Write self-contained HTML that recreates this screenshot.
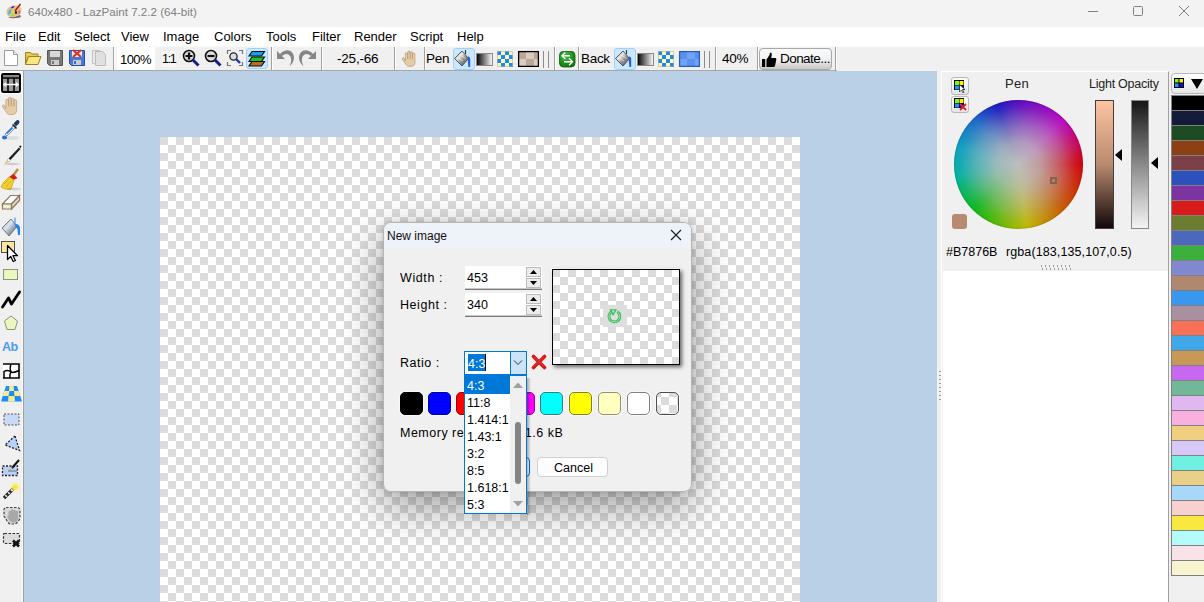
<!DOCTYPE html>
<html><head><meta charset="utf-8">
<style>
*{box-sizing:border-box;margin:0;padding:0}
html,body{width:1204px;height:602px;overflow:hidden;background:#f0f0f0;font-family:"Liberation Sans",sans-serif;font-size:12px;color:#000}
.a{position:absolute}
.t{position:absolute;white-space:nowrap;line-height:1}
#title{left:0;top:0;width:1204px;height:27px;background:#f3f3f3}
#menu{left:0;top:27px;width:1204px;height:19px;background:#fff}
#tb{left:0;top:46px;width:1204px;height:25px;background:#f0f0f0;border-bottom:1px solid #f4f2f0}
#left{left:0;top:71px;width:24px;height:531px;background:#f0f0f0;border-right:1px solid #a0a0a0}
#canvas{left:24px;top:71px;width:913px;height:531px;background:#bad0e6;overflow:hidden}
#img{left:136px;top:66px;width:640px;height:480px;

 background:conic-gradient(#fff 25%,#dcdcdc 0 50%,#fff 0 75%,#dcdcdc 0) 0 0/16px 16px}

.chk{background:conic-gradient(#fff 25%,#dcdcdc 0 50%,#fff 0 75%,#dcdcdc 0) 0 0/16px 16px}
#panel{left:941px;top:71px;width:228px;height:531px;background:#f0f0f0;border-left:1px solid #fff;border-top:1px solid #fff;border-right:1px solid #a0a0a0}
#pal{left:1169px;top:71px;width:35px;height:531px;background:#f0f0f0}
.sep{position:absolute;top:47px;width:2px;height:23px;border-left:1px solid #a0a0a0;border-right:1px solid #fff}
.menu{font-size:13px}
.sp{width:15px;height:10px;margin-left:-1px;background:#ececec;border:1px solid #bcbcbc;display:flex;align-items:center;justify-content:center}
.sp svg{display:block}
.cb{position:absolute;top:392px;width:23px;height:23px;border:1px solid;border-radius:5px;box-shadow:0 0 0 1px rgba(255,255,255,.6)}
.dd{left:467px;font-size:12.5px}
</style></head><body>
<div id="title" class="a">
 <svg class="a" style="left:5px;top:2px" width="18" height="18" viewBox="0 0 18 18"><path d="M3 15.5c3 1 9 1 13-.5l-1-2z" fill="#444" opacity=".8"/><path d="M1.5 10c0-4 4-6.5 8-6.5 4 0 7 2 7 4.5 0 3-2 6-6.5 7-5 1-8.5-1-8.5-5z" fill="#e0c090"/><path d="M3 12c0-2 1-4 2.5-5 1 0 1 2 0 4-.8 1.5-2 2-2.5 1z" fill="#40b8f0"/><path d="M6 5.5c1-1 3-1.5 3.5-1-.2.8-2 2-3 2z" fill="#2020e0"/><path d="M7 8c1-1 2.5-1 3 .5-.5 1-2 1.5-3 .5z" fill="#f8d820"/><path d="M5 13.5c1-1.5 3-2 4.5-1.5.5.8 0 1.8-1 2-1.2.3-2.5 0-3.5-.5z" fill="#a8e030"/><ellipse cx="11" cy="10.5" rx="1" ry="1.5" fill="#201010"/><path d="M13.5 9c.5-.8 1.5-.5 1.5.5l-.5 2.5c-.5.3-1 0-1-.5z" fill="#e04080"/><path d="M10 9l5.5-7" stroke="#b02010" stroke-width="1.6"/></svg>
<svg class="a" style="left:1088px;top:11px" width="10" height="1"><rect width="10" height="1" fill="#808080"/></svg>
<svg class="a" style="left:1133px;top:6px" width="10" height="10" viewBox="0 0 10 10"><rect x=".5" y=".5" width="9" height="9" rx="1" fill="none" stroke="#808080"/></svg>
<svg class="a" style="left:1179px;top:6px" width="10" height="10" viewBox="0 0 10 10"><path d="M0 0l10 10M10 0L0 10" stroke="#808080" stroke-width="1"/></svg>
<div class="t" style="left:28px;top:6px;font-size:11.6px;color:#808080">640x480 - LazPaint 7.2.2 (64-bit)</div>
</div>
<div id="menu" class="a">
 <div class="t menu" style="left:5px;top:3px">File</div>
 <div class="t menu" style="left:38px;top:3px">Edit</div>
 <div class="t menu" style="left:74px;top:3px">Select</div>
 <div class="t menu" style="left:121px;top:3px">View</div>
 <div class="t menu" style="left:163px;top:3px">Image</div>
 <div class="t menu" style="left:214px;top:3px">Colors</div>
 <div class="t menu" style="left:266px;top:3px">Tools</div>
 <div class="t menu" style="left:312px;top:3px">Filter</div>
 <div class="t menu" style="left:354px;top:3px">Render</div>
 <div class="t menu" style="left:410px;top:3px">Script</div>
 <div class="t menu" style="left:457px;top:3px">Help</div>
</div>
<div id="tb" class="a"></div>
<div class="a" style="left:0;top:46px;width:1204px;height:1px;background:#fafafa"></div>
<div class="a" style="left:0;top:70px;width:837px;height:1px;background:#a8a8a8"></div>
<!-- separators -->
<div class="sep" style="left:113px"></div>
<div class="sep" style="left:271px"></div>
<div class="sep" style="left:321px"></div>
<div class="sep" style="left:394px"></div>
<div class="sep" style="left:424px"></div>
<div class="sep" style="left:554px"></div>
<div class="sep" style="left:578px"></div>
<div class="sep" style="left:715px"></div>
<div class="sep" style="left:757px"></div>
<div class="sep" style="left:835px"></div>
<!-- new -->
<svg class="a" style="left:3px;top:49px" width="16" height="18" viewBox="0 0 16 18"><path d="M1.5 1.5h9l4 4v11h-13z" fill="#fff" stroke="#9a9a9a"/><path d="M10.5 1.5v4h4" fill="#eee" stroke="#9a9a9a"/></svg>
<!-- open -->
<svg class="a" style="left:24px;top:50px" width="18" height="16" viewBox="0 0 18 16"><path d="M1.5 2.5h5l1.5 1.5h6v3h-10l-2.5 7z" fill="#e8c94a" stroke="#a08020"/><path d="M1.5 14.5l3-8h12.5l-3 8z" fill="#f8e680" stroke="#a08020"/></svg>
<!-- save -->
<svg class="a" style="left:46px;top:49px" width="18" height="18" viewBox="0 0 18 18"><path d="M1.5 1.5h15v15h-13l-2-2z" fill="#777" stroke="#555"/><rect x="4" y="2" width="10" height="6" fill="#d8d8d8"/><rect x="5" y="11" width="8" height="5" fill="#ccc"/><rect x="6" y="12" width="2" height="3" fill="#777"/></svg>
<!-- save close -->
<svg class="a" style="left:68px;top:49px" width="18" height="18" viewBox="0 0 18 18"><path d="M1.5 1.5h15v15h-13l-2-2z" fill="#4a78d8" stroke="#2050b0"/><rect x="4" y="2" width="10" height="6" fill="#e0e8f8"/><rect x="5" y="11" width="8" height="5" fill="#ccc"/><rect x="6" y="12" width="2" height="3" fill="#3070e0"/><path d="M5 1l8 7M13 1l-8 7" stroke="#e03010" stroke-width="2.2"/></svg>
<!-- copy -->
<svg class="a" style="left:91px;top:49px" width="17" height="18" viewBox="0 0 17 18"><path d="M1.5 1.5h7l3 3v10h-10z" fill="#e8e8e8" stroke="#c4c4c4"/><path d="M4.5 2.5h7l3 3v11h-10z" fill="#e0e0e0" stroke="#bdbdbd"/></svg>
<!-- 100% -->
<div class="a" style="left:115px;top:47px;width:40px;height:23px;background:#fff;border-left:2px solid #f4f4f4"></div>
<div class="t" style="left:120px;top:53px;font-size:13px;letter-spacing:-.6px">100%</div>
<div class="a" style="left:162px;top:51px;width:14px;height:16px;background:#f6f6f6"></div>
<div class="t" style="left:162px;top:53px;font-size:12.5px;letter-spacing:-1.3px">1:1</div>
<!-- zoom in -->
<svg class="a" style="left:182px;top:49px" width="18" height="18" viewBox="0 0 18 18"><circle cx="7" cy="7" r="5.5" fill="#ddd" stroke="#111" stroke-width="1.6"/><path d="M10.5 10.5l6 6" stroke="#1a1a90" stroke-width="3"/><path d="M7 3.5v7M3.5 7h7" stroke="#111" stroke-width="2.2"/></svg>
<!-- zoom out -->
<svg class="a" style="left:204px;top:49px" width="18" height="18" viewBox="0 0 18 18"><circle cx="7" cy="7" r="5.5" fill="#ddd" stroke="#111" stroke-width="1.6"/><path d="M10.5 10.5l6 6" stroke="#1a1a90" stroke-width="3"/><path d="M3.5 7h7" stroke="#111" stroke-width="2.2"/></svg>
<!-- zoom fit -->
<svg class="a" style="left:226px;top:49px" width="18" height="18" viewBox="0 0 18 18"><path d="M1.5 5V1.5H5M13 1.5h3.5V5M16.5 13v3.5H13M5 16.5H1.5V13" fill="none" stroke="#777" stroke-width="1.2"/><circle cx="7.5" cy="7.5" r="3.6" fill="#ddd" stroke="#222" stroke-width="1.3"/><path d="M10 10l4 4" stroke="#2a2ab0" stroke-width="2.4"/></svg>
<!-- layers -->
<div class="a" style="left:246px;top:48px;width:22px;height:21px;background:#cce8ff;border:1px solid #99d1ff;border-radius:3px"></div>
<svg class="a" style="left:248px;top:50px" width="18" height="17" viewBox="0 0 18 17"><path d="M4 11.5h12.5l-3 4.5h-12.5z" fill="#b86a30" stroke="#111" stroke-width="1.2"/><path d="M4 7h12.5l-3 4.5h-12.5z" fill="#20c020" stroke="#111" stroke-width="1.2"/><path d="M4 1.5h12.5l-3 4.5h-12.5z" fill="#18a0f0" stroke="#111" stroke-width="1.2"/></svg>
<!-- undo/redo -->
<svg class="a" style="left:276px;top:49px" width="19" height="19" viewBox="0 0 19 19"><path d="M1 2V10H9z" fill="#858585"/><path d="M3.5 5.5C6 2.5 9 1.3 11.5 1.3 15 1.3 18 4.5 18 9c0 3-2 6-4.5 8.5C15 14 15.5 11.5 15 9.5 14.5 6.5 12.5 5 10.5 5 9 5 7.5 5.7 6.2 7z" fill="#858585"/></svg>
<svg class="a" style="left:298px;top:49px" width="19" height="19" viewBox="0 0 19 19"><g transform="translate(19 0) scale(-1 1)"><path d="M1 2V10H9z" fill="#858585"/><path d="M3.5 5.5C6 2.5 9 1.3 11.5 1.3 15 1.3 18 4.5 18 9c0 3-2 6-4.5 8.5C15 14 15.5 11.5 15 9.5 14.5 6.5 12.5 5 10.5 5 9 5 7.5 5.7 6.2 7z" fill="#858585"/></g></svg>
<div class="t" style="left:337px;top:52px;font-size:13.5px;letter-spacing:-.2px">-25,-66</div>
<!-- hand -->
<svg class="a" style="left:401px;top:50px" width="16" height="17" viewBox="0 0 16 17"><path d="M4.3 11V4a1.2 1.2 0 0 1 2.4 0V2.3a1.2 1.2 0 0 1 2.4 0V3a1.2 1.2 0 0 1 2.4 0v1.3a1.2 1.2 0 0 1 2.4 0v8c0 2-1 4-3.5 4H7.5c-1.5 0-2.5-1.5-3-2.5L1.5 9.5a1 1 0 0 1 1.6-1.3z" fill="#e4cca8" stroke="#b89870" stroke-width=".7"/><path d="M6.7 3.5v5.5M9.1 3v6M11.5 4v5" stroke="#b09070" stroke-width=".8"/></svg>
<div class="t" style="left:426px;top:52px;font-size:13.5px;letter-spacing:-.3px">Pen</div>
<!-- bucket1 -->
<div class="a" style="left:453px;top:48px;width:22px;height:22px;background:#cce8ff;border:1px solid #99d1ff;border-radius:3px"></div>
<svg class="a" style="left:453px;top:48px" width="20" height="20" viewBox="0 0 20 20"><defs><linearGradient id="bk" x1="0" y1="0" x2="1" y2="1"><stop offset="0" stop-color="#606060"/><stop offset=".35" stop-color="#e8e8e8"/><stop offset=".6" stop-color="#909090"/><stop offset="1" stop-color="#505050"/></linearGradient></defs><path d="M1.5 10.5L9 3l6.5 7.5L9 18z" fill="url(#bk)" stroke="#3a3a3a" stroke-width=".8"/><path d="M4 9l6 4M6.5 6.5l6 4" stroke="#fff" stroke-width="1" opacity=".5"/><path d="M12.5 2v4" stroke="#404040" stroke-width="1.2"/><path d="M15 8.5c1.5 0 2.2 1 2.2 2.5v8h-1.8l-.6-7z" fill="#1e60e0"/></svg>
<!-- gradient1 -->
<svg class="a" style="left:476px;top:53px" width="17" height="13" viewBox="0 0 17 13"><defs><linearGradient id="g1"><stop offset="0" stop-color="#000"/><stop offset="1" stop-color="#fff"/></linearGradient></defs><rect x=".5" y=".5" width="16" height="12" fill="url(#g1)" stroke="#888"/></svg>
<!-- checker1 -->
<svg class="a" style="left:497px;top:51px" width="16" height="16" viewBox="0 0 16 16"><rect width="16" height="16" fill="#fff8b0"/><g fill="#1e88f0"><rect x="0" y="0" width="4" height="4"/><rect x="8" y="0" width="4" height="4"/><rect x="4" y="4" width="4" height="4"/><rect x="12" y="4" width="4" height="4"/><rect x="0" y="8" width="4" height="4"/><rect x="8" y="8" width="4" height="4"/><rect x="4" y="12" width="4" height="4"/><rect x="12" y="12" width="4" height="4"/></g><rect x=".5" y=".5" width="15" height="15" fill="none" stroke="#b8b890" stroke-width=".6"/></svg>
<!-- texture1 -->
<svg class="a" style="left:517px;top:50px" width="23" height="18" viewBox="0 0 23 18"><rect x=".5" y=".5" width="22" height="17" fill="#fff"/><rect x="1" y="1" width="21" height="16" fill="#dccbc0"/><rect x="2" y="2" width="7" height="7" fill="#bca898"/><rect x="17" y="2" width="5" height="7" fill="#bca898"/><rect x="9" y="9" width="8" height="7" fill="#bca898"/><rect x="1.6" y="1.6" width="19.8" height="14.8" fill="none" stroke="#000" stroke-width="1.3"/></svg>
<div class="a" style="left:543px;top:51px;width:1px;height:17px;background:#8c8c8c"></div>
<div class="a" style="left:548px;top:51px;width:1px;height:17px;background:#8c8c8c"></div>
<!-- swap -->
<svg class="a" style="left:559px;top:51px" width="17" height="17" viewBox="0 0 17 17"><defs><radialGradient id="gs" cx=".4" cy=".3" r=".8"><stop offset="0" stop-color="#40c040"/><stop offset="1" stop-color="#087008"/></radialGradient></defs><rect x=".5" y=".3" width="15.5" height="15.7" rx="4" fill="url(#gs)" stroke="#0a600a" stroke-width=".8"/><path d="M11 4.8H3M6.3 1.5L3 4.8l3.3 3.3M5 10.8h8.5M10 7.3l3.5 3.5L10 14.3" fill="none" stroke="#fff" stroke-width="1.4"/></svg>
<div class="t" style="left:581px;top:52px;font-size:13.5px;letter-spacing:-.3px">Back</div>
<!-- bucket2 -->
<div class="a" style="left:614px;top:48px;width:22px;height:22px;background:#cce8ff;border:1px solid #99d1ff;border-radius:3px"></div>
<svg class="a" style="left:614px;top:48px" width="20" height="20" viewBox="0 0 20 20"><defs><linearGradient id="bk2" x1="0" y1="0" x2="1" y2="1"><stop offset="0" stop-color="#606060"/><stop offset=".35" stop-color="#e8e8e8"/><stop offset=".6" stop-color="#909090"/><stop offset="1" stop-color="#505050"/></linearGradient></defs><path d="M1.5 10.5L9 3l6.5 7.5L9 18z" fill="url(#bk2)" stroke="#3a3a3a" stroke-width=".8"/><path d="M4 9l6 4M6.5 6.5l6 4" stroke="#fff" stroke-width="1" opacity=".5"/><path d="M12.5 2v4" stroke="#404040" stroke-width="1.2"/><path d="M15 8.5c1.5 0 2.2 1 2.2 2.5v8h-1.8l-.6-7z" fill="#1e60e0"/></svg>
<svg class="a" style="left:637px;top:53px" width="17" height="13" viewBox="0 0 17 13"><rect x=".5" y=".5" width="16" height="12" fill="url(#g1)" stroke="#888"/></svg>
<svg class="a" style="left:658px;top:51px" width="16" height="16" viewBox="0 0 16 16"><rect width="16" height="16" fill="#fff8b0"/><g fill="#1e88f0"><rect x="0" y="0" width="4" height="4"/><rect x="8" y="0" width="4" height="4"/><rect x="4" y="4" width="4" height="4"/><rect x="12" y="4" width="4" height="4"/><rect x="0" y="8" width="4" height="4"/><rect x="8" y="8" width="4" height="4"/><rect x="4" y="12" width="4" height="4"/><rect x="12" y="12" width="4" height="4"/></g><rect x=".5" y=".5" width="15" height="15" fill="none" stroke="#b8b890" stroke-width=".6"/></svg>
<svg class="a" style="left:678px;top:50px" width="23" height="18" viewBox="0 0 23 18"><rect x=".5" y=".5" width="22" height="17" fill="#fcfaf4"/><rect x="1" y="1" width="21" height="16" fill="#70a4fc"/><rect x="2" y="2" width="7" height="7" fill="#5890ec"/><rect x="17" y="2" width="5" height="7" fill="#5890ec"/><rect x="9" y="9" width="8" height="7" fill="#5890ec"/><rect x="1.6" y="1.6" width="19.8" height="14.8" fill="none" stroke="#2a5cb8" stroke-width="1.3"/></svg>
<div class="a" style="left:704px;top:51px;width:1px;height:17px;background:#8c8c8c"></div>
<div class="a" style="left:709px;top:51px;width:1px;height:17px;background:#8c8c8c"></div>
<div class="t" style="left:722px;top:52px;font-size:13.5px;letter-spacing:-.3px">40%</div>
<!-- donate -->
<div class="a" style="left:759px;top:48px;width:73px;height:22px;border:1px solid #a8a8a8;border-radius:4px;background:linear-gradient(#fafafa,#f2f2f2 50%,#c8c8c8)"></div>
<svg class="a" style="left:761px;top:52px" width="16" height="16" viewBox="0 0 16 16"><rect x="1" y="7" width="3.2" height="8" fill="#000"/><path d="M5.5 7.5l3-4.5 .5-2.5c1.2 0 2 .8 1.8 2.5l-.6 3h4c.8 0 1.3.6 1.1 1.4l-1.2 6.2c-.2.8-.8 1.4-1.6 1.4h-7z" fill="#000"/></svg>
<div class="t" style="left:780px;top:52px;font-size:13.5px;letter-spacing:-.55px">Donate...</div>

<div id="left" class="a"></div>
<div class="a" style="left:22px;top:71px;width:1px;height:531px;background:#fbfbfb"></div>
<div class="a" style="left:0;top:71px;width:22px;height:23px;background:#fff"></div>
<!-- tool 1 selected -->
<svg class="a" style="left:1px;top:73px" width="20" height="20" viewBox="0 0 20 20"><rect x="1" y="1" width="18" height="18" rx="1.5" fill="#999" stroke="#000" stroke-width="2"/><rect x="2" y="2" width="16" height="2" fill="#888"/><path d="M1 5h18" stroke="#000" stroke-width="1.5"/><path d="M7 5v14M13 5v14" stroke="#000" stroke-width="1.6"/><path d="M2.5 11.5h15" stroke="#fff" stroke-width="1.5"/><path d="M2 11.5l3-2.5v5zM18 11.5l-3-2.5v5z" fill="#fff"/></svg>
<!-- hand -->
<svg class="a" style="left:1px;top:96px" width="18" height="20" viewBox="0 0 16 17.5"><path d="M4.3 11V4a1.2 1.2 0 0 1 2.4 0V2.3a1.2 1.2 0 0 1 2.4 0V3a1.2 1.2 0 0 1 2.4 0v1.3a1.2 1.2 0 0 1 2.4 0v8c0 2-1 4-3.5 4H7.5c-1.5 0-2.5-1.5-3-2.5L1.5 9.5a1 1 0 0 1 1.6-1.3z" fill="#e4cca8" stroke="#b89870" stroke-width=".6"/><path d="M6.7 3.5v5.5M9.1 3v6M11.5 4v5" stroke="#b09070" stroke-width=".7"/></svg>
<!-- eyedropper -->
<svg class="a" style="left:1px;top:119px" width="21" height="22" viewBox="0 0 21 22"><path d="M4 15L13 6l2 2-9 9z" fill="#e8f0f8" stroke="#6688aa" stroke-width=".8"/><path d="M5 14l6-6 1.2 1.2-6 6z" fill="#3a7ad8"/><path d="M12.5 4.5l3-3c1-1 3 0 3 1.5l-.5 1.5-3 3z" fill="#1a3a6a"/><path d="M11.5 5.5l4 4" stroke="#222" stroke-width="1.6"/><ellipse cx="3.5" cy="18.5" rx="2.5" ry="2" fill="#2a70d8"/><ellipse cx="11" cy="19" rx="7" ry="2" fill="#000" opacity=".08"/></svg>
<!-- pen -->
<svg class="a" style="left:2px;top:144px" width="20" height="22" viewBox="0 0 20 22"><ellipse cx="10" cy="20" rx="8" ry="1.2" fill="#000" opacity=".15"/><path d="M6.5 14.5L17 3.5l1.5 1.5-10 11z" fill="#222"/><path d="M17 2.5l1.5-1 1 1-1 1.5z" fill="#111"/><path d="M5 16l1.5-1.5 2 2-1.5 1.5z" fill="#fff" stroke="#888" stroke-width=".5"/><path d="M2 20l3-4 2 2z" fill="#e0c080"/></svg>
<!-- broom -->
<svg class="a" style="left:0px;top:168px" width="22" height="23" viewBox="0 0 22 23"><path d="M12 9l6-8" stroke="#c08a3a" stroke-width="2.4"/><path d="M9 9l3.5 3.5 5-2.5-4-4z" fill="#d02020"/><path d="M9 9c-3 3-6 5-8 10 3 2 7 3 10 2 1-3 2-6 3-9z" fill="#f0d030" stroke="#c8a000" stroke-width=".7"/><path d="M4 16l5-5M6 19l5-6" stroke="#c8a000" stroke-width=".6"/><ellipse cx="14" cy="21" rx="7" ry="1.5" fill="#000" opacity=".12"/></svg>
<!-- eraser -->
<svg class="a" style="left:1px;top:193px" width="20" height="18" viewBox="0 0 20 18"><path d="M1.5 11l8-8.5h9l-8 8.5z" fill="#fff" stroke="#8a7a60" stroke-width="1.2"/><path d="M1.5 11h9v5h-9z" fill="#f4ecd4" stroke="#8a7a60" stroke-width="1.2"/><path d="M10.5 16l8-8.5v-5l-8 8.5z" fill="#e0d4b8" stroke="#8a7a60" stroke-width="1.2"/></svg>
<!-- bucket -->
<svg class="a" style="left:0px;top:216px" width="23" height="22" viewBox="0 0 23 22"><defs><linearGradient id="bl" x1="0" y1="0" x2="1" y2="1"><stop offset="0" stop-color="#8a98a8"/><stop offset=".4" stop-color="#dde4ec"/><stop offset=".7" stop-color="#8a96a4"/><stop offset="1" stop-color="#5a6470"/></linearGradient></defs><path d="M2 12L11 3l6 7.5-8 9.5z" fill="url(#bl)" stroke="#5a6470" stroke-width=".8"/><path d="M15 1.5v7" stroke="#2a80f0" stroke-width="1"/><path d="M15.5 8c3 0 4.5 2 4.5 4.5v6.5h-2l-.5-6-2-2z" fill="#2080f0"/></svg>
<!-- select cursor -->
<svg class="a" style="left:0px;top:240px" width="21" height="23" viewBox="0 0 21 23"><rect x="1.5" y="1.5" width="13" height="11" fill="#fce89c" stroke="#505050" stroke-width="1"/><path d="M7.5 5.5v14l3.2-3 2.5 5 2.2-1-2.4-4.8h4.5z" fill="#fff" stroke="#000" stroke-width="1.3" stroke-linejoin="round"/></svg>
<!-- rect -->
<svg class="a" style="left:3px;top:269px" width="16" height="12" viewBox="0 0 16 12"><rect x=".5" y=".5" width="14" height="10" fill="#eaf8c0" stroke="#909080"/></svg>
<!-- polyline -->
<svg class="a" style="left:1px;top:290px" width="21" height="19" viewBox="0 0 21 19"><path d="M1.5 17l6-9 3 6 8-12" fill="none" stroke="#000" stroke-width="2.8" stroke-linejoin="round" stroke-linecap="round"/></svg>
<!-- pentagon -->
<svg class="a" style="left:3px;top:315px" width="16" height="16" viewBox="0 0 16 16"><path d="M8 1l6.5 5-2.5 8.5h-8l-2.5-8.5z" fill="#eaf8c0" stroke="#909080"/></svg>
<!-- Ab -->
<div class="t" style="left:2px;top:341px;font-size:12.5px;font-weight:bold;color:#4a9af8;letter-spacing:-.5px">Ab</div>
<!-- deform -->
<svg class="a" style="left:1px;top:362px" width="20" height="18" viewBox="0 0 20 18"><path d="M2 2h16v14H2" fill="#fff" stroke="#000" stroke-width="1.6"/><path d="M3 9.5c3-2 5-1 7 .5 2 1 5 0 8-1.5M10 2c-1 3-1 6 0 7.5-1 2-1.5 4-1 6.5M3 9v7" fill="none" stroke="#000" stroke-width="1.5"/></svg>
<!-- perspective -->
<svg class="a" style="left:0px;top:385px" width="23" height="17" viewBox="0 0 23 17"><defs><clipPath id="tz"><path d="M6 1h11l5 15.5H1z"/></clipPath></defs><g clip-path="url(#tz)"><rect width="23" height="17" fill="#1e8cf8"/><path d="M9.5 0h4l.5 6h-5zM3 6h6.5l-1 5h-6zM14 6h6.5l1 5h-7zM8.5 11h6l.5 6h-7z" fill="#f8ec90"/></g></svg>
<!-- select rect -->
<svg class="a" style="left:3px;top:413px" width="17" height="13" viewBox="0 0 17 13"><rect x="1" y="1" width="15" height="11" fill="#c8daf8" stroke="#555" stroke-dasharray="2 1.5"/></svg>
<!-- select poly -->
<svg class="a" style="left:3px;top:434px" width="18" height="19" viewBox="0 0 18 19"><path d="M12 2L2 11l14.5 5.5z" fill="#b8d0fc" stroke="#222" stroke-width="1.3" stroke-dasharray="2 1.5"/></svg>
<!-- select pen -->
<svg class="a" style="left:1px;top:458px" width="20" height="19" viewBox="0 0 20 19"><rect x="1.5" y="8" width="15" height="9.5" fill="#b8d0fc" stroke="#222" stroke-width="1.3" stroke-dasharray="2 1.5"/><path d="M11 10L18 2" stroke="#111" stroke-width="2"/><path d="M8 12.5l3-2.5" stroke="#e8b040" stroke-width="1.2"/><path d="M7 13h9" stroke="#555" stroke-width=".8"/></svg>
<!-- magic wand -->
<svg class="a" style="left:2px;top:481px" width="20" height="19" viewBox="0 0 20 19"><defs><radialGradient id="wg"><stop offset="0" stop-color="#f0e020"/><stop offset=".5" stop-color="#f8f070" stop-opacity=".9"/><stop offset="1" stop-color="#ffffa0" stop-opacity="0"/></radialGradient></defs><path d="M2 17l10-10" stroke="#222" stroke-width="3.2"/><path d="M3.5 15.5l1.2-1.2M6.3 12.7l1.2-1.2M9.1 9.9l1.2-1.2" stroke="#e8f0e8" stroke-width="2.4"/><circle cx="13.5" cy="6" r="5.5" fill="url(#wg)"/></svg>
<!-- hand select -->
<svg class="a" style="left:2px;top:506px" width="20" height="19" viewBox="0 0 20 19"><path d="M4 1.5h11c2 0 3 1 3 3v6c0 3-2 6-5 7.5H8c-2-1-3-3-4-5l-2-3V3.5c0-1 1-2 2-2z" fill="#d8d8d8" stroke="#444" stroke-width="1.2" stroke-dasharray="2.5 1.5"/><path d="M6.5 11V6a1.2 1.2 0 0 1 2.4 0V4.5a1.2 1.2 0 0 1 2.4 0V5a1.2 1.2 0 0 1 2.4 0v1a1.2 1.2 0 0 1 2.4 0v6c0 2.5-1.5 4.5-4 4.5h-1.5c-2 0-3-1-3.5-2.5l-1.5-2.5a1.1 1.1 0 0 1 1.9-1.1z" fill="#a8a8a8"/></svg>
<!-- select delete -->
<svg class="a" style="left:2px;top:532px" width="20" height="16" viewBox="0 0 20 16"><rect x="1.5" y="1.5" width="16" height="10" rx="1" fill="#dcdcdc" stroke="#333" stroke-width="1.2" stroke-dasharray="2.5 1.5"/><path d="M11 8.5l6 6M17 8.5l-6 6" stroke="#111" stroke-width="2.6"/></svg>

<div id="canvas" class="a"><div id="img" class="a"></div></div>
<div id="panel" class="a"></div>
<div class="a" style="left:943px;top:271px;width:225px;height:331px;background:#fff"></div>
<div class="a" style="left:939px;top:371px;width:2px;height:30px;background:repeating-linear-gradient(180deg,#9a9a9a 0 1.5px,transparent 1.5px 4px)"></div>
<!-- panel buttons -->
<div class="a" style="left:951px;top:77px;width:18px;height:18px;border:1px solid #b8b8b8;border-radius:3px;background:linear-gradient(#fff,#e4e4e4)"></div>
<svg class="a" style="left:953px;top:79px" width="14" height="14" viewBox="0 0 14 14"><rect x="1" y="1" width="10" height="10" fill="#000"/><rect x="2" y="2" width="4" height="4" fill="#7cfc00"/><rect x="6.5" y="2" width="4" height="4" fill="#ffee00"/><rect x="2" y="6.5" width="4" height="4" fill="#2090ff"/><rect x="6.5" y="6.5" width="4" height="4" fill="#0010e0"/><path d="M6.5 5.5v7.5l2-2 1.5 3 1-.5-1.5-3h2.5z" fill="#fff" stroke="#000" stroke-width=".6"/></svg>
<div class="a" style="left:951px;top:96px;width:18px;height:17px;border:1px solid #b8b8b8;border-radius:3px;background:linear-gradient(#fff,#e4e4e4)"></div>
<svg class="a" style="left:953px;top:97px" width="14" height="14" viewBox="0 0 14 14"><rect x="1" y="1" width="10" height="10" fill="#000"/><rect x="2" y="2" width="4" height="4" fill="#7cfc00"/><rect x="6.5" y="2" width="4" height="4" fill="#ffee00"/><rect x="2" y="6.5" width="4" height="4" fill="#2090ff"/><rect x="6.5" y="6.5" width="4" height="4" fill="#0010e0"/><path d="M7 7l6 6M13 7l-6 6" stroke="#e02020" stroke-width="1.8"/></svg>
<div class="t" style="left:1005px;top:77px;font-size:13px;color:#222;letter-spacing:.3px">Pen</div>
<div class="t" style="left:1089px;top:78px;font-size:12.5px;color:#222;letter-spacing:-.25px">Light Opacity</div>
<!-- wheel -->
<div class="a" style="left:954px;top:100px;width:129px;height:129px;border-radius:50%;background:conic-gradient(#5a08c0 0deg,#b808c0 45deg,#d00008 90deg,#c85800 135deg,#c0b800 172deg,#48b800 205deg,#08b818 225deg,#00b0a0 260deg,#08a0c0 285deg,#1868c8 315deg,#1818c0 340deg,#5a08c0 360deg)"></div>
<div class="a" style="left:954px;top:100px;width:129px;height:129px;border-radius:50%;background:radial-gradient(circle closest-side,rgba(190,190,190,1) 0%,rgba(190,190,190,.8) 35%,rgba(190,190,190,.45) 65%,rgba(190,190,190,.12) 88%,rgba(190,190,190,0) 100%);box-shadow:inset 0 0 2px rgba(0,0,0,.25)"></div>
<div class="a" style="left:1050px;top:177px;width:7px;height:7px;border:2px solid #7c6458"></div>
<div class="a" style="left:952px;top:214px;width:15px;height:15px;border-radius:3px;background:#b88a70"></div>
<!-- sliders -->
<div class="a" style="left:1095px;top:100px;width:19px;height:129px;border:1px solid #404040;background:linear-gradient(#fdc4a0,#b88a70 50%,#120808)"></div>
<svg class="a" style="left:1115px;top:148px" width="8" height="14" viewBox="0 0 8 14"><path d="M0 7l7-6v12z" fill="#000"/></svg>
<div class="a" style="left:1131px;top:100px;width:18px;height:129px;border:1px solid #888;background:linear-gradient(#161616,#8a8a8a 50%,#f4f4f4)"></div>
<svg class="a" style="left:1151px;top:156px" width="8" height="14" viewBox="0 0 8 14"><path d="M0 7l7-6v12z" fill="#000"/></svg>
<div class="t" style="left:946px;top:246px;font-size:12.5px">#B7876B</div>
<div class="t" style="left:1006px;top:246px;font-size:12.5px;letter-spacing:.1px">rgba(183,135,107,0.5)</div>
<div class="a" style="left:1041px;top:265px;width:30px;height:2px;background:repeating-linear-gradient(90deg,#a0a0a0 0 1px,transparent 1px 4px)"></div>
<div class="a" style="left:1042px;top:268px;width:30px;height:2px;background:repeating-linear-gradient(90deg,#a0a0a0 0 1px,transparent 1px 4px)"></div>

<div id="pal" class="a"></div>
<div class="a" style="left:1171px;top:73px;width:36px;height:21px;border:1px solid #b8b8b8;border-radius:4px;background:linear-gradient(#fff,#e6e6e6)"></div>
<svg class="a" style="left:1174px;top:78px" width="10" height="10" viewBox="0 0 10 10"><rect width="10" height="10" fill="#000"/><rect x="1" y="1" width="3.5" height="3.5" fill="#7cfc00"/><rect x="5.5" y="1" width="3.5" height="3.5" fill="#ffee00"/><rect x="1" y="5.5" width="3.5" height="3.5" fill="#2090ff"/><rect x="5.5" y="5.5" width="3.5" height="3.5" fill="#0010e0"/></svg>
<svg class="a" style="left:1191px;top:79px" width="12" height="10" viewBox="0 0 12 10"><path d="M0 0h12l-6 10z" fill="#000"/></svg>
<div class="a" style="left:1171px;top:95px;width:34px;height:481px;background:#808080"></div>
<div class="a" style="left:1172px;top:96px;width:32px;height:14px;background:#000000"></div>
<div class="a" style="left:1172px;top:111px;width:32px;height:14px;background:#141c3c"></div>
<div class="a" style="left:1172px;top:126px;width:32px;height:14px;background:#1e4c22"></div>
<div class="a" style="left:1172px;top:141px;width:32px;height:14px;background:#8c4014"></div>
<div class="a" style="left:1172px;top:156px;width:32px;height:14px;background:#7c4048"></div>
<div class="a" style="left:1172px;top:171px;width:32px;height:14px;background:#2c50bc"></div>
<div class="a" style="left:1172px;top:186px;width:32px;height:14px;background:#7c34a0"></div>
<div class="a" style="left:1172px;top:201px;width:32px;height:14px;background:#d81c1c"></div>
<div class="a" style="left:1172px;top:216px;width:32px;height:14px;background:#6c7c30"></div>
<div class="a" style="left:1172px;top:231px;width:32px;height:14px;background:#4c68bc"></div>
<div class="a" style="left:1172px;top:246px;width:32px;height:14px;background:#3cb03c"></div>
<div class="a" style="left:1172px;top:261px;width:32px;height:14px;background:#8088d0"></div>
<div class="a" style="left:1172px;top:276px;width:32px;height:14px;background:#b08870"></div>
<div class="a" style="left:1172px;top:291px;width:32px;height:14px;background:#3898f0"></div>
<div class="a" style="left:1172px;top:306px;width:32px;height:14px;background:#a890a0"></div>
<div class="a" style="left:1172px;top:321px;width:32px;height:14px;background:#f87058"></div>
<div class="a" style="left:1172px;top:336px;width:32px;height:14px;background:#40a8e8"></div>
<div class="a" style="left:1172px;top:351px;width:32px;height:14px;background:#c89858"></div>
<div class="a" style="left:1172px;top:366px;width:32px;height:14px;background:#c868f0"></div>
<div class="a" style="left:1172px;top:381px;width:32px;height:14px;background:#70b898"></div>
<div class="a" style="left:1172px;top:396px;width:32px;height:14px;background:#e0b8f0"></div>
<div class="a" style="left:1172px;top:411px;width:32px;height:14px;background:#f8b0e0"></div>
<div class="a" style="left:1172px;top:426px;width:32px;height:14px;background:#f0d080"></div>
<div class="a" style="left:1172px;top:441px;width:32px;height:14px;background:#d8c8f8"></div>
<div class="a" style="left:1172px;top:456px;width:32px;height:14px;background:#70f0e0"></div>
<div class="a" style="left:1172px;top:471px;width:32px;height:14px;background:#e8d088"></div>
<div class="a" style="left:1172px;top:486px;width:32px;height:14px;background:#a8d8f8"></div>
<div class="a" style="left:1172px;top:501px;width:32px;height:14px;background:#f8d0d0"></div>
<div class="a" style="left:1172px;top:516px;width:32px;height:14px;background:#f8e840"></div>
<div class="a" style="left:1172px;top:531px;width:32px;height:14px;background:#b4fcfc"></div>
<div class="a" style="left:1172px;top:546px;width:32px;height:14px;background:#f8e4e8"></div>
<div class="a" style="left:1172px;top:561px;width:32px;height:14px;background:#f8f4d0"></div>


<!-- dialog -->
<div class="a" style="left:383px;top:222px;width:309px;height:270px;border-radius:8px;box-shadow:0 14px 44px rgba(0,0,0,.4),0 0 5px rgba(0,0,0,.15)"></div>
<div class="a" style="left:383px;top:222px;width:309px;height:270px;border-radius:8px;border:1px solid #b4b4b4;background:#f0f0f0;overflow:hidden">
 <div class="a" style="left:0;top:0;width:307px;height:25px;background:#eef2f9"></div>
</div>
<div class="t" style="left:387px;top:230px;font-size:12px;color:#111">New image</div>
<svg class="a" style="left:670px;top:229px" width="12" height="12" viewBox="0 0 12 12"><path d="M1 1l10 10M11 1L1 11" stroke="#1a1a1a" stroke-width="1.1"/></svg>
<div class="t" style="left:400px;top:272px;font-size:12.5px;letter-spacing:.6px">Width :</div>
<div class="t" style="left:400px;top:299px;font-size:12.5px;letter-spacing:.55px">Height :</div>
<div class="t" style="left:400px;top:357px;font-size:12.5px;letter-spacing:.5px">Ratio :</div>
<!-- fields -->
<div class="a" style="left:465px;top:266px;width:77px;height:24px;background:#fff;border-bottom:1px solid #7a7a7a;box-shadow:inset 0 -1px 0 #c8c8c8"></div>
<div class="t" style="left:467px;top:272px;font-size:12.5px">453</div>
<div class="a sp" style="left:527px;top:267px"><svg width="7" height="4" viewBox="0 0 7 4"><path d="M0 4l3.5-4 3.5 4z"/></svg></div>
<div class="a sp" style="left:527px;top:278px"><svg width="7" height="4" viewBox="0 0 7 4"><path d="M0 0l3.5 4 3.5-4z"/></svg></div>
<div class="a" style="left:465px;top:293px;width:77px;height:24px;background:#fff;border-bottom:1px solid #7a7a7a;box-shadow:inset 0 -1px 0 #c8c8c8"></div>
<div class="t" style="left:467px;top:299px;font-size:12.5px">340</div>
<div class="a sp" style="left:527px;top:294px"><svg width="7" height="4" viewBox="0 0 7 4"><path d="M0 4l3.5-4 3.5 4z"/></svg></div>
<div class="a sp" style="left:527px;top:305px"><svg width="7" height="4" viewBox="0 0 7 4"><path d="M0 0l3.5 4 3.5-4z"/></svg></div>
<!-- preview -->
<div class="a chk" style="left:552px;top:269px;width:128px;height:96px;border:1px solid #000;box-shadow:2px 2px 4px rgba(0,0,0,.6),-1px -1px 0 #fff;background-position:-1px -1px"></div>
<div class="a" style="left:603px;top:305px;width:24px;height:22px;background:#dedede"></div>
<svg class="a" style="left:606px;top:307px" width="17" height="18" viewBox="0 0 17 18"><path d="M11.25 4.74A5.5 5.5 0 1 1 6.5 4.3" fill="none" stroke="#34b858" stroke-width="2.8"/><path d="M11.25 4.74A5.5 5.5 0 1 1 6.5 4.3" fill="none" stroke="#b8f0c8" stroke-width=".8"/><path d="M3.5 2.3h7.5L7 9z" fill="#34b858"/><path d="M5.5 3.3h3.5L7 6.5z" fill="#a8e8b8"/></svg>
<!-- red x -->
<svg class="a" style="left:531px;top:354px" width="16" height="16" viewBox="0 0 16 16"><path d="M2.5 2.5l11 11M13.5 2.5l-11 11" stroke="#d81818" stroke-width="3.6" stroke-linecap="round"/><path d="M3 2.5l10 10M13 2.5l-10 10" stroke="#f06060" stroke-width="1" opacity=".5"/></svg>
<!-- color buttons -->
<div class="cb" style="left:400px;background:#000;border-color:#000"></div>
<div class="cb" style="left:428px;background:#0000ff;border-color:#0000a0"></div>
<div class="cb" style="left:456px;background:#ff0000;border-color:#a00000"></div>
<div class="cb" style="left:484px;background:#00ff00;border-color:#00a000"></div>
<div class="cb" style="left:512px;background:#ff00ff;border-color:#a000a0"></div>
<div class="cb" style="left:540px;background:#00ffff;border-color:#308080"></div>
<div class="cb" style="left:569px;background:#ffff00;border-color:#808030"></div>
<div class="cb" style="left:598px;background:#ffffc0;border-color:#909070"></div>
<div class="cb" style="left:627px;background:#fff;border-color:#808080"></div>
<div class="cb chk" style="left:656px;border-color:#505050;background-position:-4px -4px"></div>
<div class="t" style="left:400px;top:427px;font-size:12.5px;letter-spacing:.5px">Memory required: 601.6 kB</div>
<!-- buttons -->
<div class="a" style="left:470px;top:457px;width:60px;height:20px;border:1px solid #0078d7;border-radius:4px;background:#fff"></div>
<div class="a" style="left:537px;top:457px;width:71px;height:20px;border:1px solid #d0d0d0;border-radius:4px;background:#fdfdfd"></div>
<div class="t" style="left:554px;top:462px;font-size:12.5px">Cancel</div>
<!-- combo -->
<div class="a" style="left:464px;top:351px;width:63px;height:24px;border:1px solid #0078d7;background:#fff"></div>
<div class="a" style="left:510px;top:352px;width:16px;height:22px;background:#cce4f7;border-left:1px solid #0078d7"></div>
<svg class="a" style="left:513px;top:360px" width="10" height="6" viewBox="0 0 10 6"><path d="M1 .5l4 4 4-4" fill="none" stroke="#333" stroke-width="1"/></svg>
<div class="a" style="left:468px;top:354px;width:17px;height:17px;background:#0078d7"></div>
<div class="a" style="left:485px;top:354px;width:1px;height:17px;background:#000"></div>
<div class="t" style="left:468px;top:358px;font-size:12.5px;color:#fff">4:3</div>
<!-- dropdown -->
<div class="a" style="left:527px;top:378px;width:4px;height:137px;background:linear-gradient(90deg,rgba(0,0,0,.3),rgba(0,0,0,0))"></div>
<div class="a" style="left:464px;top:375px;width:63px;height:139px;border:1px solid #0078d7;background:#fff"></div>
<div class="a" style="left:510px;top:376px;width:16px;height:137px;background:#f0f0f0"></div>
<svg class="a" style="left:513px;top:382px" width="10" height="6" viewBox="0 0 10 6"><path d="M0 6l5-5.5 5 5.5z" fill="#a0a0a0"/></svg>
<svg class="a" style="left:513px;top:501px" width="10" height="6" viewBox="0 0 10 6"><path d="M0 0l5 5.5 5-5.5z" fill="#a0a0a0"/></svg>
<div class="a" style="left:515px;top:422px;width:6px;height:62px;border-radius:3px;background:#858585"></div>
<div class="a" style="left:465px;top:376px;width:45px;height:18px;background:#0078d7"></div>
<div class="t dd" style="top:380px;color:#fff">4:3</div>
<div class="t dd" style="top:397px">11:8</div>
<div class="t dd" style="top:414px">1.414:1</div>
<div class="t dd" style="top:431px">1.43:1</div>
<div class="t dd" style="top:448px">3:2</div>
<div class="t dd" style="top:465px">8:5</div>
<div class="t dd" style="top:482px">1.618:1</div>
<div class="t dd" style="top:499px">5:3</div>
</body></html>
